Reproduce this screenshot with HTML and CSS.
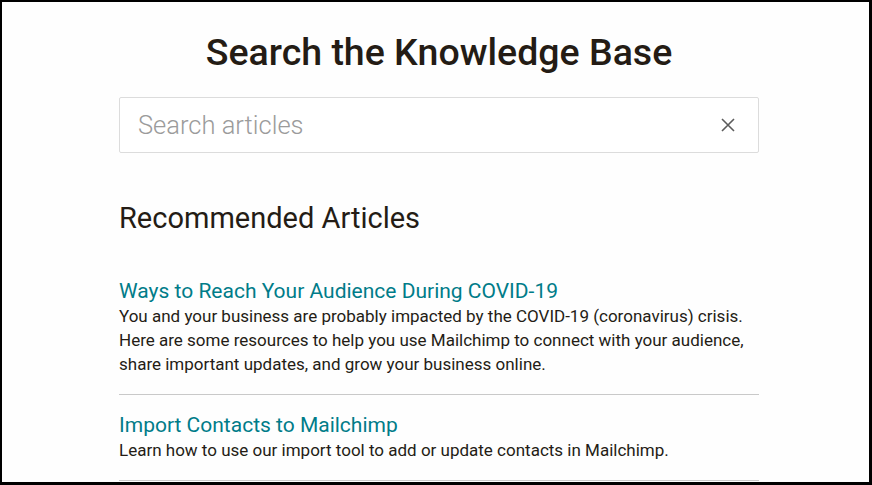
FILE: index.html
```html
<!DOCTYPE html>
<html lang="en">
<head>
    <meta charset="UTF-8">
    <meta name="viewport" content="width=device-width, initial-scale=1.0">
    <title>Knowledge Base</title>
    <link rel="stylesheet" href="styles.css">
</head>
<body>
    <div class="frame">
        <div class="content">
            <h1 class="title">Search the Knowledge Base</h1>

            <div class="search">
                <input class="search-input" type="text" placeholder="Search articles">
                <button class="clear" aria-label="Clear">
                    <svg width="16" height="16" viewBox="0 0 16 16">
                        <path d="M2 2 L14 14 M14 2 L2 14" stroke="#5c5c5c" stroke-width="1.6" fill="none"/>
                    </svg>
                </button>
            </div>

            <h2 class="section">Recommended Articles</h2>

            <div class="article first">
                <a class="article-link" href="#">Ways to Reach Your Audience During COVID-19</a>
                <p class="article-desc">You and your business are probably impacted by the COVID-19 (coronavirus) crisis. Here are some resources to help you use Mailchimp to connect with your audience, share important updates, and grow your business online.</p>
            </div>

            <div class="article">
                <a class="article-link" href="#">Import Contacts to Mailchimp</a>
                <p class="article-desc">Learn how to use our import tool to add or update contacts in Mailchimp.</p>
            </div>
        </div>
    </div>
</body>
</html>
```

FILE: styles.css
```css
body {
    margin: 0;
    font-family: Roboto, "Liberation Sans", sans-serif;
    color: #241c15;
    background-color: #000;
}

.frame {
    height: 485px;
    box-sizing: border-box;
    border: 2px solid #000;
    border-right-width: 3px;
    border-bottom-width: 3px;
    background-color: #fefefe;
    overflow: hidden;
}

.content {
    width: 640px;
    margin-left: 117px;
}

.title {
    margin: 0;
    padding-top: 30px;
    font-size: 37.5px;
    line-height: 40px;
    font-weight: 500;
    text-align: center;
}

.search {
    margin-top: 25px;
    height: 56px;
    box-sizing: border-box;
    border: 1px solid #dcdcdc;
    border-radius: 2px;
    display: flex;
    align-items: center;
    padding: 0 22px 0 18px;
    background-color: #fff;
}

.search-input {
    flex: 1;
    border: none;
    outline: none;
    padding: 0;
    font-family: Roboto, "Liberation Sans", sans-serif;
    font-size: 25.5px;
    font-weight: 300;
    color: #241c15;
    background: transparent;
}

.search-input::placeholder {
    color: #9b9b9b;
}

.clear {
    border: none;
    background: none;
    padding: 0;
    width: 16px;
    height: 16px;
    display: flex;
    cursor: pointer;
}

.section {
    margin: 48px 0 0;
    font-size: 29px;
    line-height: 34px;
    font-weight: 400;
}

.article {
    padding: 17px 0 18px;
    border-bottom: 1px solid #c9c9c9;
}

.article.first {
    padding-top: 43px;
}

.article-link {
    display: block;
    color: #007c89;
    text-decoration: none;
    font-size: 21px;
    line-height: 26px;
}

.article-desc {
    margin: 0;
    font-size: 17px;
    line-height: 24px;
}
```
